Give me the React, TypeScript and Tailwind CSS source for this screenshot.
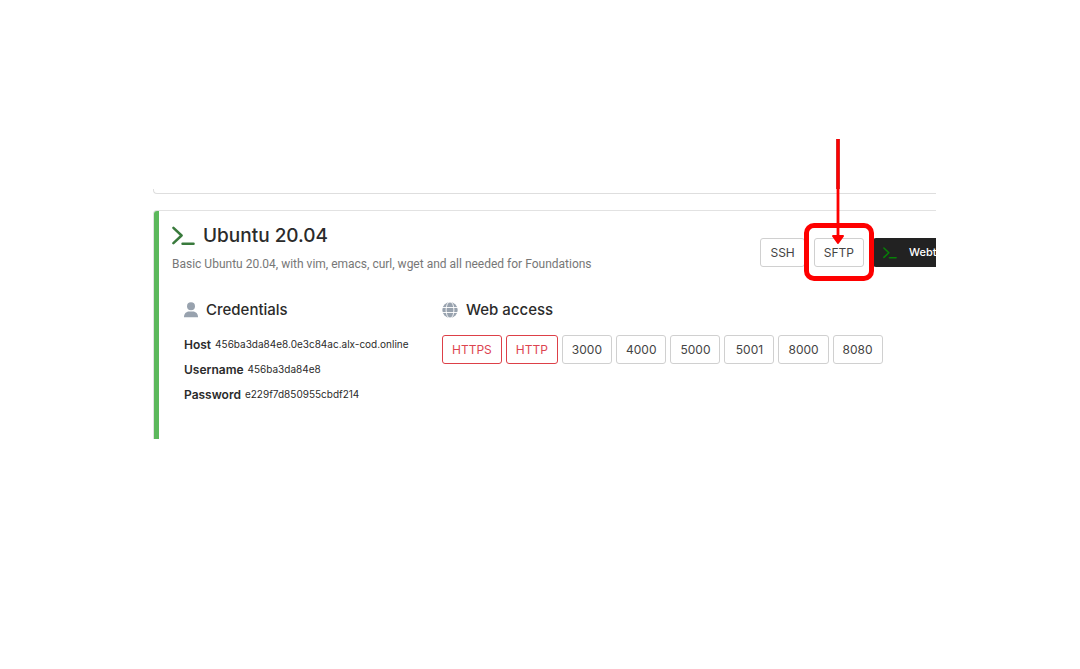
import React from "react";

const ports = ["3000", "4000", "5000", "5001", "8000", "8080"];

const credentials = [
  { label: "Host", value: "456ba3da84e8.0e3c84ac.alx-cod.online" },
  { label: "Username", value: "456ba3da84e8" },
  { label: "Password", value: "e229f7d850955cbdf214" },
];

function PromptIcon({ className }: { className: string }) {
  return (
    <svg viewBox="0 0 24 20" fill="none" stroke="currentColor" strokeWidth="2.6" strokeLinecap="round" strokeLinejoin="round" className={className} aria-hidden="true">
      <path d="M1.5 1.500 10 9.500 1.500 17.500M11 18h11.500" />
    </svg>
  );
}

function UserIcon() {
  return (
    <svg viewBox="0 0 14 16" fill="#98a2ae" className="h-4 w-3.5 shrink-0" aria-hidden="true">
      <circle cx="7" cy="4.200" r="4" />
      <path d="M0 15.300C0 11.700 2 9.500 5.200 9.500h3.600c3.200 0 5.200 2.200 5.200 5.800z" />
    </svg>
  );
}

function GlobeIcon() {
  return (
    <svg viewBox="0 0 16 16" className="size-4 shrink-0" aria-hidden="true">
      <circle cx="8" cy="8" r="7.700" fill="#98a2ae" />
      <g fill="none" stroke="#fff" strokeWidth="0.900">
        <path d="M0 5.500h16M0 10.500h16" />
        <ellipse cx="8" cy="8" rx="3.900" ry="8.200" />
      </g>
    </svg>
  );
}

const buttonStyles = {
  plain: "h-[29px] rounded-[3px] border border-[#d0d0d0] bg-white px-[9px] text-[12px] text-[#444]",
  port: "h-[29px] min-w-[50px] rounded-[3px] border border-[#d0d0d0] bg-white px-[9px] text-[12px] text-[#444]",
  danger: "h-[29px] rounded-[3px] border border-[#dd4048] bg-white px-[9px] text-[12px] text-[#dd4450]",
};

function OutlineButton({ children, kind = "plain" }: { children: React.ReactNode; kind?: keyof typeof buttonStyles }) {
  return (
    <button type="button" className={buttonStyles[kind]}>
      {children}
    </button>
  );
}

function SftpCallout() {
  return (
    <div className="pointer-events-none absolute -inset-x-[10px] -top-[15px] -bottom-[14px] rounded-[10px] border-5 border-[#fe0000]">
      <svg viewBox="0 0 14 106" className="absolute -top-[89px] left-[22px] h-[106px] w-3.5" aria-hidden="true">
        <path d="M7 0v50" stroke="#bd4548" strokeWidth="4" />
        <path d="M7 0v98" stroke="#fe0000" strokeWidth="2.800" />
        <path d="M2 97h10L7 104z" fill="#fe0000" stroke="#fe0000" strokeWidth="2" strokeLinejoin="round" />
      </svg>
    </div>
  );
}

export default function App() {
  return (
    <main className="min-h-screen bg-white pt-[139px] pr-36 pl-[153px] font-['Inter',sans-serif] text-[#2b2b2b]">
      <div className="overflow-hidden pt-[50px]">
        <div className="h-[5px] rounded-bl-[4px] border-b border-l border-[#dedede]" />
        <section className="mt-4 h-[229px] rounded-tl-[4px] border-t border-l border-[#e2e2e2]">
          <div className="h-full rounded-tl-[3px] border-l-5 border-[#5cb85c] pt-[13px] pl-[13px]">
            <header className="flex justify-between">
              <div>
                <h1 className="flex items-center gap-2 text-[19px] leading-6 font-medium">
                  <PromptIcon className="h-5 w-[23px] text-[#397a3c]" />
                  Ubuntu 20.04
                </h1>
                <p className="mt-1.5 font-['Roboto',sans-serif] text-[12px] leading-5 text-[#777]">
                  Basic Ubuntu 20.04, with vim, emacs, curl, wget and all needed for Foundations
                </p>
              </div>
              <div className="-mr-[5px] flex shrink-0 items-start gap-[9px] pt-3.5">
                <OutlineButton>SSH</OutlineButton>
                <div className="relative z-10 flex">
                  <OutlineButton>SFTP</OutlineButton>
                  <SftpCallout />
                </div>
                <button type="button" className="flex h-[29px] w-[68px] items-center gap-3 overflow-hidden rounded-l-[3px] bg-[#222] pl-2.5 text-[11px] font-medium whitespace-nowrap text-white">
                  <PromptIcon className="h-3 w-3.5 shrink-0 text-[#078007]" />
                  Webterm
                </button>
              </div>
            </header>
            <div className="mt-6 flex pl-3">
              <section className="w-[258px]">
                <h2 className="flex items-center gap-2 text-[15px] leading-6 font-medium">
                  <UserIcon />
                  Credentials
                </h2>
                <dl className="mt-2.5">
                  {credentials.map((item) => (
                    <div key={item.label} className="flex h-[25px] items-center gap-1 whitespace-nowrap">
                      <dt className="text-[12px] font-semibold">{item.label}</dt>
                      <dd className="text-[10px]">{item.value}</dd>
                    </div>
                  ))}
                </dl>
              </section>
              <section>
                <h2 className="flex items-center gap-2 text-[15px] leading-6 font-medium">
                  <GlobeIcon />
                  Web access
                </h2>
                <div className="mt-[13px] flex gap-1">
                  <OutlineButton kind="danger">HTTPS</OutlineButton>
                  <OutlineButton kind="danger">HTTP</OutlineButton>
                  {ports.map((port) => (
                    <OutlineButton key={port} kind="port">{port}</OutlineButton>
                  ))}
                </div>
              </section>
            </div>
          </div>
        </section>
      </div>
    </main>
  );
}
